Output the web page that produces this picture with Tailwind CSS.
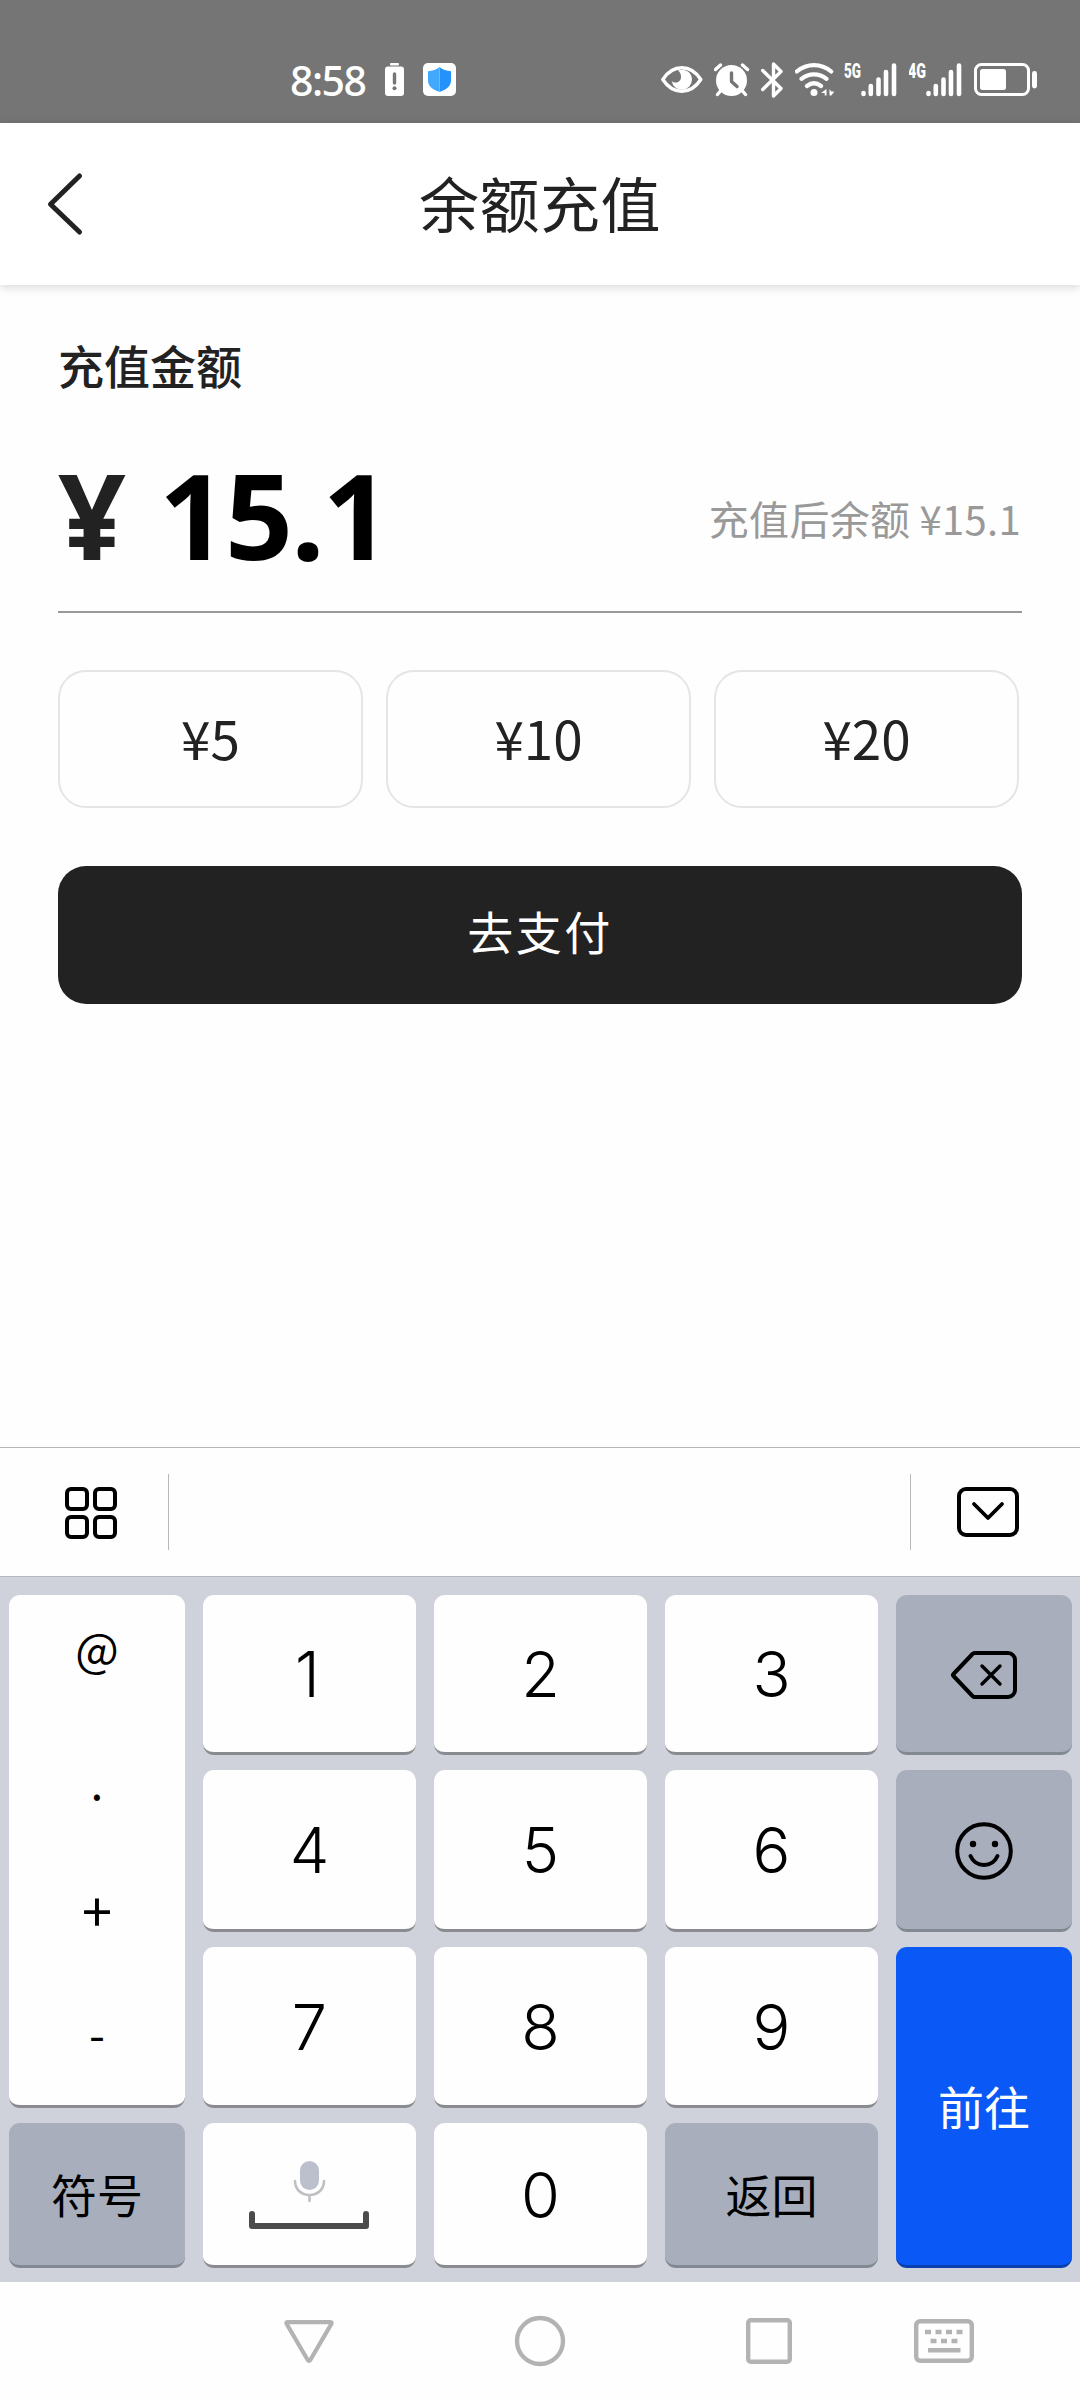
<!DOCTYPE html>
<html lang="zh-CN">
<head>
  <meta charset="UTF-8" />
  <meta name="viewport" content="width=device-width, initial-scale=1.0" />
  <title>余额充值</title>
  <script src="https://cdn.jsdelivr.net/npm/@tailwindcss/browser@4"></script>
</head>
<body class="w-[1080px] h-[2400px] flex flex-col bg-[#fefefe] text-[#222222] font-['Noto_Sans_CJK_SC',sans-serif] overflow-hidden">

  <!-- status bar -->
  <div class="h-[123px] shrink-0 bg-[#757575] text-white flex items-start pt-[60px]">
    <span class="ml-[290px] w-[95px] mt-[-4px] text-[41px] leading-[48px] font-medium font-['Noto_Sans',sans-serif] tracking-[-1.5px]">8:58</span>
    <svg class="w-[20px] h-[40px]" viewBox="0 0 20 40">
      <rect x="5" y="3" width="9" height="2.5" rx="1" fill="#fff" />
      <rect x="0" y="6.5" width="19" height="29.5" rx="3" fill="#fff" />
      <path d="M9.5 14v9" stroke="#757575" stroke-width="3.4" stroke-linecap="round" />
      <circle cx="9.5" cy="28.3" r="2" fill="#757575" />
    </svg>
    <svg class="ml-[18px] w-[33px] h-[40px]" viewBox="0 0 33 40">
      <rect x="0" y="3" width="33" height="33" rx="5" fill="#fff" />
      <path d="M16.5 7c3 2.6 7 4 11.5 4.3v9.2c0 5.5-4.5 9.2-11.5 11.5z" fill="#2492fa" />
      <path d="M16.5 7c-3 2.6-7 4-11.5 4.3v9.2c0 5.5 4.5 9.2 11.5 11.5z" fill="#42a8fc" />
    </svg>
    <svg class="ml-[205px] w-[42px] h-[40px]" viewBox="0 0 42 40">
      <path d="M1.8 19.5C7 11.5 13.5 7.8 20.8 7.8S34.6 11.5 39.8 19.5C34.6 27.5 28.1 31.2 20.8 31.2S7 27.5 1.8 19.5z" fill="none" stroke="#fff" stroke-width="3.4" stroke-linejoin="round" />
      <path d="M17 10.5c6-2.5 14 1 14 9a10.2 10.2 0 0 1-20.3 1.5c3.5 3 9.3 1.5 9.3-4 0-2.8-1-5-3-6.5z" fill="#fff" />
    </svg>
    <svg class="ml-[11px] w-[36px] h-[40px]" viewBox="0 0 36 40">
      <circle cx="17.5" cy="20.5" r="15.5" fill="#fff" />
      <path d="M1.5 9.5l5-4.5M28.5 5l5 4.5M6.5 31l-3 3.5M28.5 31l3 3.5" stroke="#fff" stroke-width="3.4" stroke-linecap="round" />
      <path d="M17.5 13v8.5l5.5 5" fill="none" stroke="#757575" stroke-width="3.4" stroke-linecap="round" stroke-linejoin="round" />
    </svg>
    <svg class="ml-[11px] w-[24px] h-[40px]" viewBox="0 0 24 40">
      <path d="M1.7 10.5L20 28.5l-7.5 7.5V4l7.5 7.5L1.7 29.5" fill="none" stroke="#fff" stroke-width="3.4" stroke-linecap="round" stroke-linejoin="round" />
    </svg>
    <svg class="ml-[10px] w-[42px] h-[40px]" viewBox="0 0 42 40">
      <path d="M1.8 11.5C12 3 26 3 36.2 11.5M6.5 18.8C14 12.8 24 12.8 31.5 18.8M12 26c4.5-3.5 9.5-3.5 14 0" fill="none" stroke="#fff" stroke-width="4.2" stroke-linecap="round" />
      <circle cx="19" cy="32.5" r="3.5" fill="#fff" />
      <path d="M31.5 29v6.5h-1.8v-2.5h-3.7zM34.5 29v6.5h1.8l3-4h-3z" fill="#fff" />
    </svg>
    <svg class="ml-[7px] w-[54px] h-[40px]" viewBox="0 0 54 40">
      <text x="0" y="17.5" font-family="Roboto" font-weight="900" font-size="20.5" textLength="17" lengthAdjust="spacingAndGlyphs" fill="#fff">5G</text>
      <path d="M19.5 33v1M26.8 26v8M34.5 19.5v14.5M42 12v22M50 5.5v28.5" stroke="#fff" stroke-width="4.6" stroke-linecap="round" />
    </svg>
    <svg class="ml-[11px] w-[54px] h-[40px]" viewBox="0 0 54 40">
      <text x="-1" y="17.5" font-family="Roboto" font-weight="900" font-size="20.5" textLength="18" lengthAdjust="spacingAndGlyphs" fill="#fff">4G</text>
      <path d="M19.5 33v1M26.8 26v8M34.5 19.5v14.5M42 12v22M50 5.5v28.5" stroke="#fff" stroke-width="4.6" stroke-linecap="round" />
    </svg>
    <svg class="ml-[11px] w-[64px] h-[40px]" viewBox="0 0 64 40">
      <rect x="1.5" y="4.5" width="53" height="30" rx="6" fill="none" stroke="#fff" stroke-width="3" />
      <rect x="6" y="9" width="26" height="21" rx="2.5" fill="#fff" />
      <rect x="58" y="11" width="5" height="17.5" rx="2.4" fill="#fff" />
    </svg>
  </div>

  <!-- title bar -->
  <div class="h-[162px] shrink-0 bg-white flex items-center justify-center relative shadow-[0_2px_9px_rgba(0,0,0,0.16)]">
    <svg class="absolute left-[44px] top-[47px] w-[44px] h-[68px]" viewBox="0 0 44 68">
      <path d="M35.5 6L6.5 34.3L35.5 62" fill="none" stroke="#222" stroke-width="5" stroke-linecap="round" stroke-linejoin="round" />
    </svg>
    <h1 class="mb-[4px] text-[60px] leading-[80px] tracking-[0.5px]">余额充值</h1>
  </div>

  <!-- recharge form -->
  <div class="px-[58px] flex-1">
    <div class="mt-[45px] text-[46px] leading-[68px] font-medium">充值金额</div>
    <div class="mt-[49px] h-[166px] flex items-start justify-between border-b-2 border-[#999999]">
      <div class="mt-[-3px] flex text-[119px] leading-[140px] font-bold font-['Noto_Sans',sans-serif]">
        <span class="w-[101px]">¥</span>
        <span class="text-black tracking-[-2px]">15.1</span>
      </div>
      <div class="mt-[37px] mr-px text-[40px] leading-[68px] tracking-[0.3px] text-[#999999]">充值后余额 ¥15.1</div>
    </div>
    <div class="mt-[57px] flex gap-[23px] text-[53px]">
      <button class="w-[305px] h-[138px] pb-[3px] rounded-[28px] border-2 border-[#e5e5e5]">¥5</button>
      <button class="w-[305px] h-[138px] pb-[3px] rounded-[28px] border-2 border-[#e5e5e5]">¥10</button>
      <button class="w-[305px] h-[138px] pb-[3px] rounded-[28px] border-2 border-[#e5e5e5]">¥20</button>
    </div>
    <button class="mt-[58px] w-full h-[138px] pb-[9px] rounded-[28px] bg-[#222222] text-white text-[46px] tracking-[2.5px]">去支付</button>
  </div>

  <!-- keyboard toolbar -->
  <div class="h-[130px] shrink-0 border-y border-[#b5b6ba] bg-[#fefefe] flex items-center text-black">
    <svg class="ml-[65px] mt-[2px] w-[52px] h-[52px]" viewBox="0 0 52 52" fill="none" stroke="#000" stroke-width="4">
      <rect x="2" y="2" width="20" height="20" rx="4" />
      <rect x="30" y="2" width="20" height="20" rx="4" />
      <rect x="2" y="30" width="20" height="20" rx="4" />
      <rect x="30" y="30" width="20" height="20" rx="4" />
    </svg>
    <div class="ml-[51px] w-px h-[76px] bg-[#b8b8ba]"></div>
    <div class="ml-[741px] w-px h-[76px] bg-[#b8b8ba]"></div>
    <svg class="ml-[46px] w-[62px] h-[50px]" viewBox="0 0 62 50" fill="none" stroke="#000" stroke-width="4" stroke-linecap="round" stroke-linejoin="round">
      <rect x="2" y="2" width="58" height="46" rx="7" />
      <path d="M17 17l14 14l14-14" stroke-width="3.8" />
    </svg>
  </div>

  <!-- keypad -->
  <div class="h-[705px] shrink-0 bg-[#cfd1db] px-[9px] pt-[18px] grid grid-cols-[176px_213px_213px_213px_176px] grid-rows-[160px_162px_161px_145px] gap-x-[18px] gap-y-[15px] content-start justify-start text-black text-[63px] font-[350] font-['Inter',sans-serif]">
    <div class="row-span-3 rounded-[11px] bg-[#fefefe] border-b-3 border-[#8a8b91] flex flex-col items-center text-[46px] leading-[60px] font-normal font-['Noto_Sans_CJK_SC',sans-serif]">
      <span class="mt-[22px]">@</span>
      <span class="mt-[73px]">.</span>
      <span class="mt-[69px] text-[54px]">+</span>
      <span class="mt-[63px]">-</span>
    </div>
    <div class="pt-[2px] pr-[4px] rounded-[11px] bg-[#fefefe] border-b-3 border-[#8a8b91] flex items-center justify-center">1</div>
    <div class="pt-[2px] rounded-[11px] bg-[#fefefe] border-b-3 border-[#8a8b91] flex items-center justify-center">2</div>
    <div class="pt-[2px] rounded-[11px] bg-[#fefefe] border-b-3 border-[#8a8b91] flex items-center justify-center">3</div>
    <div class="pt-[2px] rounded-[11px] bg-[#a8aebc] border-b-3 border-[#838992] flex items-center justify-center">
      <svg class="w-[68px] h-[50px]" viewBox="0 0 68 50" fill="none" stroke="#000" stroke-width="4" stroke-linecap="round" stroke-linejoin="round">
        <path d="M24.5 3H58a7 7 0 0 1 7 7v30a7 7 0 0 1-7 7H24.5Q23.5 47 22.5 46L3.5 26Q2.5 25 3.5 24L22.5 4Q23.5 3 24.5 3z" />
        <path d="M32 16l18 18M50 16l-18 18" stroke-width="3.4" />
      </svg>
    </div>

    <div class="pt-[2px] rounded-[11px] bg-[#fefefe] border-b-3 border-[#8a8b91] flex items-center justify-center">4</div>
    <div class="pt-[2px] rounded-[11px] bg-[#fefefe] border-b-3 border-[#8a8b91] flex items-center justify-center">5</div>
    <div class="pt-[2px] rounded-[11px] bg-[#fefefe] border-b-3 border-[#8a8b91] flex items-center justify-center">6</div>
    <div class="rounded-[11px] bg-[#a8aebc] border-b-3 border-[#838992] flex items-center justify-center">
      <svg class="mt-[2px] w-[58px] h-[58px]" viewBox="0 0 58 58" fill="none" stroke="#000" stroke-width="4" stroke-linecap="round">
        <circle cx="29" cy="29" r="26.8" />
        <circle cx="18" cy="22" r="3.2" fill="#000" stroke="none" />
        <circle cx="40" cy="22" r="3.2" fill="#000" stroke="none" />
        <path d="M15.5 34c5.5 12 21.5 12 27 0" />
      </svg>
    </div>

    <div class="pt-[2px] rounded-[11px] bg-[#fefefe] border-b-3 border-[#8a8b91] flex items-center justify-center">7</div>
    <div class="pt-[2px] rounded-[11px] bg-[#fefefe] border-b-3 border-[#8a8b91] flex items-center justify-center">8</div>
    <div class="pt-[2px] rounded-[11px] bg-[#fefefe] border-b-3 border-[#8a8b91] flex items-center justify-center">9</div>
    <div class="pb-[2px] row-span-2 rounded-[11px] bg-[#0a58f6] border-b-3 border-[#0840ae] flex items-center justify-center text-white text-[46px] font-normal font-['Noto_Sans_CJK_SC',sans-serif]">前往</div>

    <div class="pb-[2px] rounded-[11px] bg-[#a8aebc] border-b-3 border-[#838992] flex items-center justify-center text-[46px] font-normal font-['Noto_Sans_CJK_SC',sans-serif]">符号</div>
    <div class="rounded-[11px] bg-[#fefefe] border-b-3 border-[#8a8b91] flex justify-center">
      <svg class="mt-[37px] mr-[2px] w-[120px] h-[70px]" viewBox="0 0 120 70" fill="none" stroke-linecap="round">
        <rect x="51" y="1" width="19" height="29" rx="9.5" fill="#bcc0cc" />
        <path d="M46 21c0 8 6 14 14.5 14S75 29 75 21M60.5 35v6" stroke="#bfc0c4" stroke-width="2.6" />
        <path d="M3 54v12h114v-12" stroke="#4b4b4b" stroke-width="6" stroke-linejoin="round" />
      </svg>
    </div>
    <div class="pt-[2px] rounded-[11px] bg-[#fefefe] border-b-3 border-[#8a8b91] flex items-center justify-center">0</div>
    <div class="pb-[2px] rounded-[11px] bg-[#a8aebc] border-b-3 border-[#838992] flex items-center justify-center text-[46px] font-normal font-['Noto_Sans_CJK_SC',sans-serif]">返回</div>
  </div>

  <!-- navigation bar -->
  <div class="h-[118px] shrink-0 bg-[#fefefe] flex items-start pt-[33px]">
    <svg class="ml-[283px] w-[52px] h-[52px]" viewBox="0 0 52 52" fill="none" stroke="#b3b3b3" stroke-width="4.2" stroke-linejoin="round">
      <path d="M4.5 7.2h43q1.8 0 .8 1.8L27.3 45q-1.3 1.8-2.6 0L3.7 9q-1-1.8.8-1.8z" />
    </svg>
    <svg class="ml-[179px] w-[52px] h-[52px]" viewBox="0 0 52 52" fill="none" stroke="#b3b3b3" stroke-width="4.4">
      <circle cx="26" cy="26" r="23" />
    </svg>
    <svg class="ml-[177px] w-[52px] h-[52px]" viewBox="0 0 52 52" fill="none" stroke="#b3b3b3" stroke-width="4.4">
      <rect x="5.2" y="5.2" width="41.6" height="41.6" rx="2.5" />
    </svg>
    <svg class="ml-[119px] w-[60px] h-[52px]" viewBox="0 0 60 52">
      <rect x="2.2" y="6.2" width="55.6" height="39.6" rx="4" fill="none" stroke="#b3b3b3" stroke-width="4.4" />
      <path d="M11 17h6M21.5 17h6M32 17h6M42.5 17h6M16.5 26h6M27 26h6M37.5 26h6M14 35.2h32.5" stroke="#b3b3b3" stroke-width="4.4" />
    </svg>
  </div>

</body>
</html>
